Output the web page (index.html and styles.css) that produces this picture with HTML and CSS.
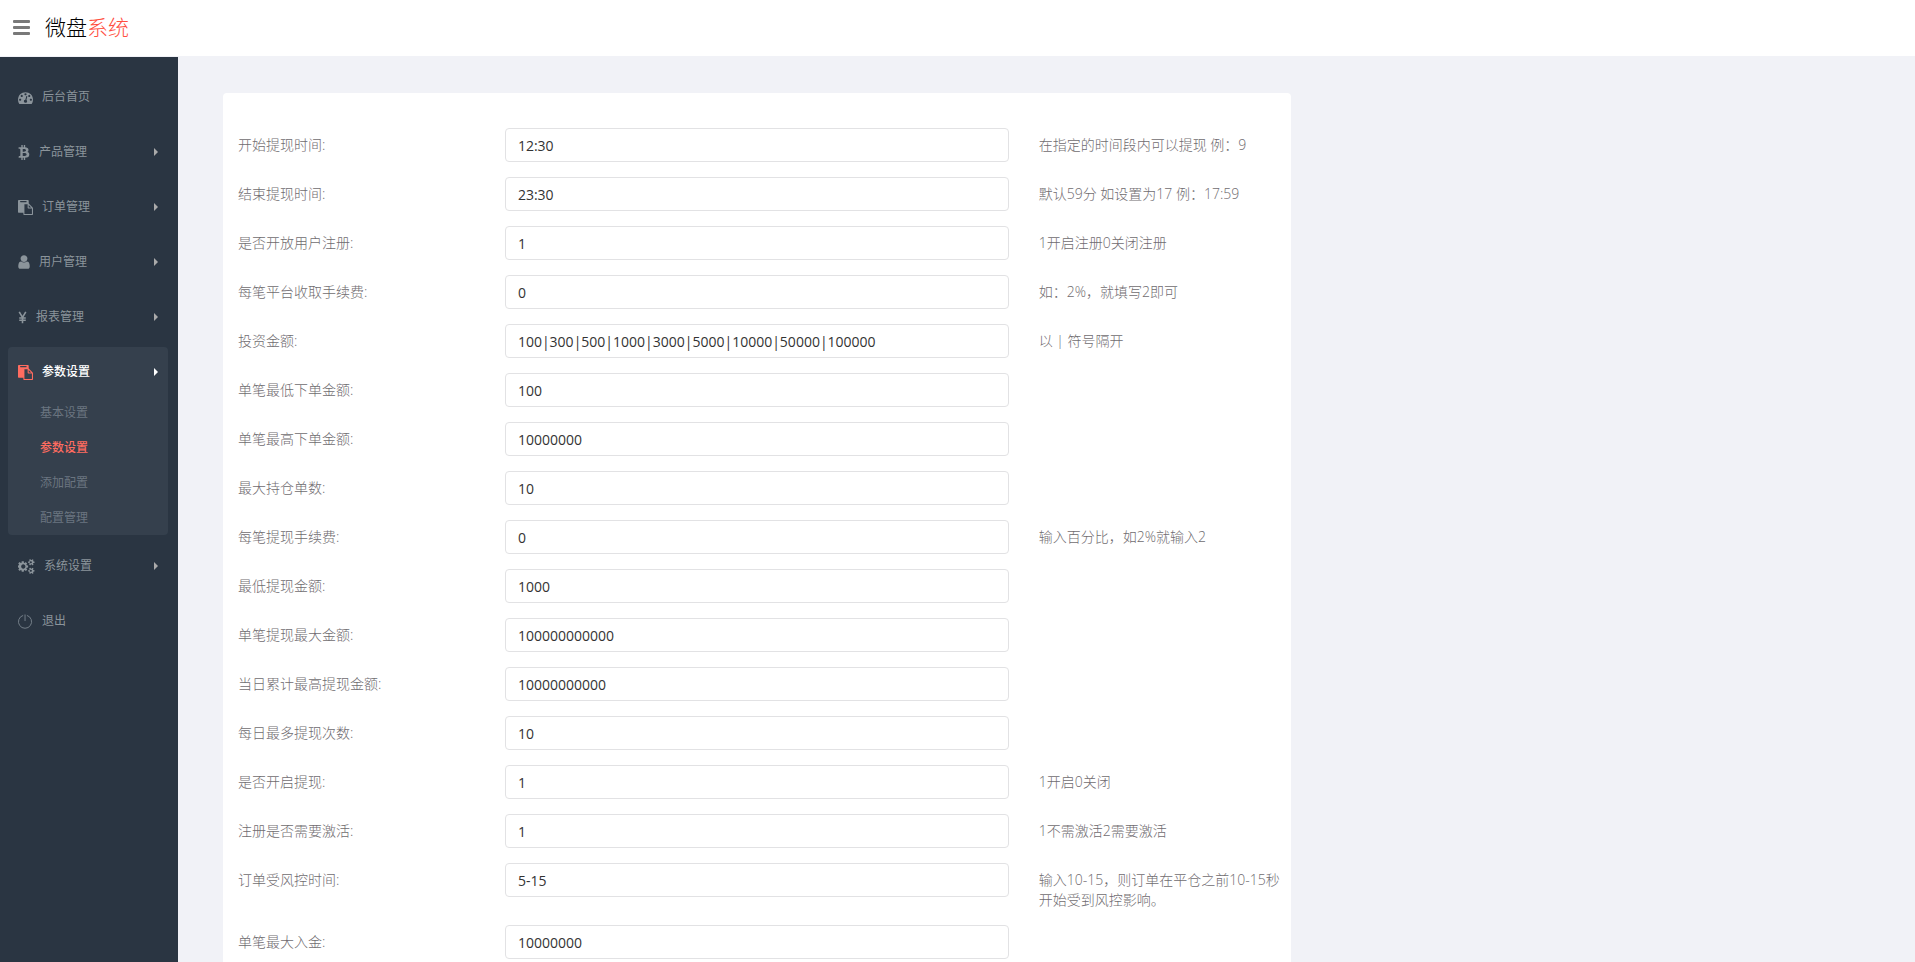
FILE: index.html
```html
<!DOCTYPE html>
<html lang="zh-CN">
<head>
  <meta charset="UTF-8">
  <meta name="viewport" content="width=device-width, initial-scale=1">
  <title>微盘系统</title>
  <link rel="stylesheet" href="styles.css">
</head>
<body>
  <svg class="sprite" aria-hidden="true">
    <symbol id="i-dashboard" viewBox="0 0 1792 1792"><path d="M384 1152q0-53-37.5-90.5t-90.5-37.5-90.5 37.5-37.5 90.5 37.5 90.5 90.5 37.5 90.5-37.5 37.5-90.5zm192-448q0-53-37.5-90.5t-90.5-37.5-90.5 37.5-37.5 90.5 37.5 90.5 90.5 37.5 90.5-37.5 37.5-90.5zm428 481l101-382q6-26-7.5-48.5t-38.5-29.5-48 6.5-30 39.5l-101 382q-60 5-107 43.5t-63 98.5q-20 77 20 146t117 89 146-20 89-117q16-60-6-117t-72-91zm660-33q0-53-37.5-90.5t-90.5-37.5-90.5 37.5-37.5 90.5 37.5 90.5 90.5 37.5 90.5-37.5 37.5-90.5zm-640-640q0-53-37.5-90.5t-90.5-37.5-90.5 37.5-37.5 90.5 37.5 90.5 90.5 37.5 90.5-37.5 37.5-90.5zm448 192q0-53-37.5-90.5t-90.5-37.5-90.5 37.5-37.5 90.5 37.5 90.5 90.5 37.5 90.5-37.5 37.5-90.5zm320 448q0 261-141 483-19 29-54 29h-1402q-35 0-54-29-141-221-141-483 0-182 71-348t191-286 286-191 348-71 348 71 286 191 191 286 71 348z"/></symbol>
    <symbol id="i-bitcoin" viewBox="256 0 1280 1792"><path d="M1399 635q18 182-131 258 117 28 175 103t45 214q-7 71-32.5 125t-64.5 89-97 58.5-121.5 34.5-145.5 15v255h-154v-251q-80 0-122-1v252h-154v-255q-18 0-54-.5t-55-.5h-200l31-183h111q50 0 58-51v-402h16q-6-1-16-1v-287q-13-68-89-68h-111v-164l212 1q64 0 97-1v-252h154v247q82-2 122-2v-245h154v252q79 7 140 22.5t113 45 82.5 78 36.5 114.5zm-215 545q0-36-15-64t-37-46-57.5-30.5-65.5-18.5-74-9-69-3-64.5 1-47.5 1v338q8 0 37 .5t48 .5 53-1.5 58.5-4 57-8.5 55.5-14 47.5-21 39.5-30 24.5-40 9.5-51zm-71-476q0-33-12.5-58.5t-30.5-42-48-28-55-16.5-61.5-8-58-2.5-54 1-39.5.5v307q5 0 34.5.5t46.5 0 50-2 55-5.5 51.5-11 48.5-18.5 37-27 27-38.5 9-51z"/></symbol>
    <symbol id="i-paste" viewBox="0 0 1792 1792"><path d="M768 1664h896v-640h-416q-40 0-68-28t-28-68v-416h-384v1152zm256-1440v-64q0-13-9.5-22.5t-22.5-9.5h-704q-13 0-22.5 9.5t-9.5 22.5v64q0 13 9.5 22.5t22.5 9.5h704q13 0 22.5-9.5t9.5-22.5zm256 672h299l-299-299v299zm512 128v672q0 40-28 68t-68 28h-960q-40 0-68-28t-28-68v-160h-544q-40 0-68-28t-28-68v-1344q0-40 28-68t68-28h1088q40 0 68 28t28 68v328q21 13 36 28l408 408q28 28 48 76t20 88z"/></symbol>
    <symbol id="i-user" viewBox="256 0 1280 1792"><path d="M1536 1399q0 109-62.5 187t-150.5 78h-854q-88 0-150.5-78t-62.5-187q0-85 8.5-160.5t31.5-152 58.5-131 94-89 134.5-34.5q131 128 313 128t313-128q76 0 134.5 34.5t94 89 58.5 131 31.5 152 8.5 160.5zm-256-887q0 159-112.5 271.5t-271.5 112.5-271.5-112.5-112.5-271.5 112.5-271.5 271.5-112.5 271.5 112.5 112.5 271.5z"/></symbol>
    <symbol id="i-yen" viewBox="0 0 9 16"><path d="M1 2l3.500 6L8 2M4.500 7.500V14M1 8.500h7M1 11h7" fill="none" stroke="currentColor" stroke-width="1.700"/></symbol>
    <symbol id="i-cogs" viewBox="0 0 1920 1792"><path d="M832 896q0-106-75-181t-181-75-181 75-75 181 75 181 181 75 181-75 75-181zm768 512q0-52-38-90t-90-38-90 38-38 90q0 53 37.500 90.500t90.500 37.500 90.500-37.500 37.500-90.500zm0-1024q0-52-38-90t-90-38-90 38-38 90q0 53 37.500 90.500t90.500 37.500 90.500-37.500 37.500-90.500zm-448 421v185q0 10-7 19.500t-16 10.500l-155 24q-11 35-32 76 34 48 90 115 7 11 7 20 0 12-7 19-23 30-82.500 89.500t-78.500 59.500q-11 0-21-7l-115-90q-37 19-77 31-11 108-23 155-7 24-30 24h-186q-11 0-20-7.500t-10-17.500l-23-153q-34-10-75-31l-118 89q-7 7-20 7-11 0-21-8-144-133-144-160 0-9 7-19 10-14 41-53t47-61q-23-44-35-82l-152-24q-10-1-17-9.500t-7-19.500v-185q0-10 7-19.500t16-10.500l155-24q11-35 32-76-34-48-90-115-7-11-7-20 0-12 7-20 22-30 82-89t79-59q11 0 21 7l115 90q34-18 77-32 11-108 23-154 7-24 30-24h186q11 0 20 7.500t10 17.500l23 153q34 10 75 31l118-89q8-7 20-7 11 0 21 8 144 133 144 160 0 8-7 19-12 16-42 54t-45 60q23 48 34 82l152 23q10 2 17 10.500t7 19.500zm768 533v140q0 16-149 31-12 27-30 52 51 113 51 138 0 4-4 7-122 71-124 71-8 0-46-47t-52-68q-20 2-30 2t-30-2q-14 21-52 68t-46 47q-2 0-124-71-4-3-4-7 0-25 51-138-18-25-30-52-149-15-149-31v-140q0-16 149-31 13-29 30-52-51-113-51-138 0-4 4-7 4-2 35-20t59-34 30-16q8 0 46 46.500t52 67.500q20-2 30-2t30 2q51-71 92-112l6-2q4 0 124 70 4 3 4 7 0 25-51 138 17 23 30 52 149 15 149 31zm0-1024v140q0 16-149 31-12 27-30 52 51 113 51 138 0 4-4 7-122 71-124 71-8 0-46-47t-52-68q-20 2-30 2t-30-2q-14 21-52 68t-46 47q-2 0-124-71-4-3-4-7 0-25 51-138-18-25-30-52-149-15-149-31v-140q0-16 149-31 13-29 30-52-51-113-51-138 0-4 4-7 4-2 35-20t59-34 30-16q8 0 46 46.500t52 67.500q20-2 30-2t30 2q51-71 92-112l6-2q4 0 124 70 4 3 4 7 0 25-51 138 17 23 30 52 149 15 149 31z"/></symbol>
    <symbol id="i-power" viewBox="0 0 16 16"><path d="M5.500 1.500a7 7 0 1 0 4 0M7.500 .5v7" fill="none" stroke="currentColor"/></symbol>
  </svg>

  <header class="header">
    <button class="toggle" type="button" aria-label="菜单">
      <span></span><span></span><span></span>
    </button>
    <a class="logo" href="#">微盘<span>系统</span></a>
  </header>

  <div class="container">
    <nav class="sidebar">
      <ul class="menu">
        <li><a href="#"><svg class="icon"><use href="#i-dashboard"/></svg>后台首页</a></li>
        <li class="sub"><a href="#"><svg class="icon icon-narrow"><use href="#i-bitcoin"/></svg>产品管理</a></li>
        <li class="sub"><a href="#"><svg class="icon"><use href="#i-paste"/></svg>订单管理</a></li>
        <li class="sub"><a href="#"><svg class="icon icon-narrow"><use href="#i-user"/></svg>用户管理</a></li>
        <li class="sub"><a href="#"><svg class="icon icon-yen"><use href="#i-yen"/></svg>报表管理</a></li>
        <li class="sub active">
          <a href="#"><svg class="icon"><use href="#i-paste"/></svg>参数设置</a>
          <ul class="submenu">
            <li><a href="#">基本设置</a></li>
            <li class="current"><a href="#">参数设置</a></li>
            <li><a href="#">添加配置</a></li>
            <li><a href="#">配置管理</a></li>
          </ul>
        </li>
        <li class="sub"><a href="#"><svg class="icon icon-wide"><use href="#i-cogs"/></svg>系统设置</a></li>
        <li><a href="#"><svg class="icon icon-power"><use href="#i-power"/></svg>退出</a></li>
      </ul>
    </nav>

    <main class="main">
      <form class="panel">
        <div class="row">
          <label for="f1">开始提现时间:</label>
          <div class="field"><input type="text" id="f1" value="12:30"></div>
          <p class="hint">在指定的时间段内可以提现 例：9</p>
        </div>
        <div class="row">
          <label for="f2">结束提现时间:</label>
          <div class="field"><input type="text" id="f2" value="23:30"></div>
          <p class="hint">默认59分 如设置为17 例：17:59</p>
        </div>
        <div class="row">
          <label for="f3">是否开放用户注册:</label>
          <div class="field"><input type="text" id="f3" value="1"></div>
          <p class="hint">1开启注册0关闭注册</p>
        </div>
        <div class="row">
          <label for="f4">每笔平台收取手续费:</label>
          <div class="field"><input type="text" id="f4" value="0"></div>
          <p class="hint">如：2%，就填写2即可</p>
        </div>
        <div class="row">
          <label for="f5">投资金额:</label>
          <div class="field"><input type="text" id="f5" value="100|300|500|1000|3000|5000|10000|50000|100000"></div>
          <p class="hint">以 | 符号隔开</p>
        </div>
        <div class="row">
          <label for="f6">单笔最低下单金额:</label>
          <div class="field"><input type="text" id="f6" value="100"></div>
        </div>
        <div class="row">
          <label for="f7">单笔最高下单金额:</label>
          <div class="field"><input type="text" id="f7" value="10000000"></div>
        </div>
        <div class="row">
          <label for="f8">最大持仓单数:</label>
          <div class="field"><input type="text" id="f8" value="10"></div>
        </div>
        <div class="row">
          <label for="f9">每笔提现手续费:</label>
          <div class="field"><input type="text" id="f9" value="0"></div>
          <p class="hint">输入百分比，如2%就输入2</p>
        </div>
        <div class="row">
          <label for="f10">最低提现金额:</label>
          <div class="field"><input type="text" id="f10" value="1000"></div>
        </div>
        <div class="row">
          <label for="f11">单笔提现最大金额:</label>
          <div class="field"><input type="text" id="f11" value="100000000000"></div>
        </div>
        <div class="row">
          <label for="f12">当日累计最高提现金额:</label>
          <div class="field"><input type="text" id="f12" value="10000000000"></div>
        </div>
        <div class="row">
          <label for="f13">每日最多提现次数:</label>
          <div class="field"><input type="text" id="f13" value="10"></div>
        </div>
        <div class="row">
          <label for="f14">是否开启提现:</label>
          <div class="field"><input type="text" id="f14" value="1"></div>
          <p class="hint">1开启0关闭</p>
        </div>
        <div class="row">
          <label for="f15">注册是否需要激活:</label>
          <div class="field"><input type="text" id="f15" value="1"></div>
          <p class="hint">1不需激活2需要激活</p>
        </div>
        <div class="row">
          <label for="f16">订单受风控时间:</label>
          <div class="field"><input type="text" id="f16" value="5-15"></div>
          <p class="hint">输入10-15，则订单在平仓之前10-15秒开始受到风控影响。</p>
        </div>
        <div class="row">
          <label for="f17">单笔最大入金:</label>
          <div class="field"><input type="text" id="f17" value="10000000"></div>
        </div>
      </form>
    </main>
  </div>
</body>
</html>
```

FILE: styles.css
```css
* {
  box-sizing: border-box;
}
body {
  margin: 0;
  min-height: 100vh;
  display: flex;
  flex-direction: column;
  background-color: #f1f2f7;
  color: #706c70;
  font-family: "Open Sans", "Noto Sans CJK SC", sans-serif;
  font-size: 14px;
  line-height: 20px;
}
ul {
  list-style: none;
  margin: 0;
  padding: 0;
}
a {
  color: inherit;
  text-decoration: none;
}
.sprite {
  display: none;
}

/* header */
.header {
  display: flex;
  align-items: center;
  gap: 15px;
  height: 57px;
  padding: 0 13px 2px;
  background-color: #fff;
  border-bottom: 1px solid #f1f2f7;
}
.toggle {
  display: flex;
  flex-direction: column;
  gap: 3px;
  width: 17px;
  padding: 0;
  border: none;
  background: none;
  cursor: pointer;
}
.toggle span {
  height: 3px;
  border-radius: 1px;
  background-color: #797979;
}
.logo {
  color: #000;
  font-size: 21px;
  font-weight: 300;
  line-height: 30px;
}
.logo span {
  color: #ff4e40;
}

.container {
  flex: 1;
  display: flex;
}

/* sidebar */
.sidebar {
  flex: none;
  width: 178px;
  padding: 15px 10px 0 8px;
  background-color: #2a3542;
  font-size: 12px;
}
.menu > li {
  margin-bottom: 6px;
  border-radius: 4px;
}
.menu > li > a {
  display: flex;
  align-items: center;
  gap: 9px;
  height: 49px;
  padding: 1px 10px 0;
  color: #8b949b;
}
.icon {
  width: 15px;
  height: 15px;
  fill: currentColor;
}
.icon-narrow {
  width: 12px;
  height: 16px;
}
.icon-yen {
  width: 9px;
}
.icon-wide {
  width: 17px;
}
.icon-power {
  color: #78828c;
}
.sub > a::after {
  content: "";
  margin-left: auto;
  border: 4px solid transparent;
  border-left-color: #aaa;
  border-right: none;
}
.menu > .active {
  background-color: #35404d;
}
.menu > .active > a {
  color: #fff;
  font-weight: 500;
}
.active .icon {
  color: #ff6c60;
}
.menu > .active > a::after {
  border-left-color: #fff;
}
.submenu li + li {
  margin-top: 1px;
}
.submenu a {
  display: block;
  padding-left: 32px;
  line-height: 34px;
  color: #6b7580;
}
.submenu .current a {
  color: #ff6c60;
  font-weight: 500;
}

/* form */
.main {
  flex: 1;
  display: flex;
  padding: 36px 0 0 45px;
}
.panel {
  width: 63.1%;
  padding-top: 35px;
  background-color: #fff;
  border-radius: 4px 4px 0 0;
}
.row {
  display: grid;
  grid-template-columns: 3fr 6fr 3fr;
  margin-bottom: 15px;
  font-weight: 300;
}
.row:last-child {
  margin-bottom: 0;
}
.row label {
  padding: 7px 15px 0;
}
.hint {
  margin: 0;
  padding: 7px 8px 0 15px;
}
.field {
  padding: 0 15px;
}
.field input {
  display: block;
  width: 100%;
  height: 34px;
  padding: 6px 12px;
  border: 1px solid #e2e2e4;
  border-radius: 4px;
  background-color: #fff;
  color: #333;
  font-family: inherit;
  font-size: 14px;
  line-height: 20px;
}
```
